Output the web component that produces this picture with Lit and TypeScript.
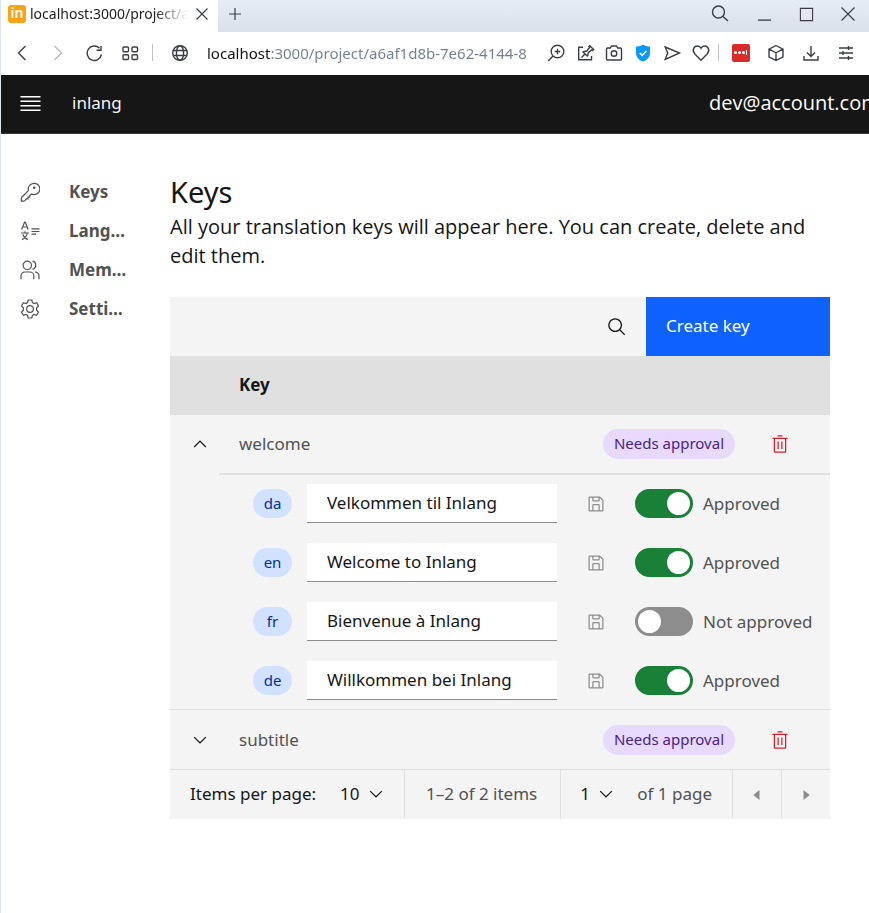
import { LitElement, html, svg, css, nothing } from "lit";
import type { TemplateResult } from "lit";
import { customElement, property, state } from "lit/decorators.js";
import { classMap } from "lit/directives/class-map.js";

const shapes: Record<string, { box: string; body: TemplateResult }> = {
  menu: { box: "0 0 20 20", body: svg`<path d="M2 4H18V5.2H2zM2 7.6H18V8.8H2zM2 11.2H18V12.4H2zM2 14.8H18V16H2z"/>` },
  search: { box: "0 0 32 32", body: svg`<path d="M29,27.5859l-7.5521-7.5521a11.0177,11.0177,0,1,0-1.4141,1.4141L27.5859,29ZM4,13a9,9,0,1,1,9,9A9.01,9.01,0,0,1,4,13Z"/>` },
  trash: { box: "0 0 32 32", body: svg`<path d="M12 12H14V24H12zM18 12H20V24H18z"/><path d="M4 6V8H6V28a2 2 0 0 0 2 2H24a2 2 0 0 0 2-2V8h2V6zM8 28V8H24V28zM12 2H20V4H12z"/>` },
  save: { box: "0 0 32 32", body: svg`<path d="M27.71,9.29l-5-5A1,1,0,0,0,22,4H6A2,2,0,0,0,4,6V26a2,2,0,0,0,2,2H26a2,2,0,0,0,2-2V10A1,1,0,0,0,27.71,9.29ZM12,6h8v4H12Zm8,20H12V18h8Zm2,0V18a2,2,0,0,0-2-2H12a2,2,0,0,0-2,2v8H6V6h4v4a2,2,0,0,0,2,2h8a2,2,0,0,0,2-2V6.41l4,4V26Z"/>` },
  down: { box: "0 0 16 16", body: svg`<path d="M8 11L3 6 3.7 5.3 8 9.6 12.3 5.3 13 6z"/>` },
  up: { box: "0 0 16 16", body: svg`<path d="M8 5L13 10 12.3 10.7 8 6.4 3.7 10.7 3 10z"/>` },
  caretLeft: { box: "0 0 32 32", body: svg`<path d="M20 24L10 16 20 8z"/>` },
  caretRight: { box: "0 0 32 32", body: svg`<path d="M12 8L22 16 12 24z"/>` },
  key: { box: "0 0 20 20", body: svg`<g class="line"><path d="M12.6 1.6a5.6 5.6 0 1 1 .8 10.9c-.9 0-1.5-.2-2.2-.4L9.700 13.500v1.700H8v1.700H6.300L5.200 18.300c-.6.6-1.200.8-2 .8H1.300v-2.400c0-.7.2-1.200.7-1.700l6.400-6.400A5.600 5.600 0 0 1 12.600 1.600z"/></g><circle cx="14.2" cy="5.800" r="1.300"/>` },
  language: { box: "0 0 20 20", body: svg`<g class="line"><path d="M1.600 8.500L4.600 1h.6l3 7.500M2.600 6h4.600M1 12h8M5 10.300V12M7.300 12c-.4 3-2.700 5.300-5.300 6.600M2.900 13.500c.7 2.200 2.500 4.100 5 5.100M11.500 7.800H19.500M11.500 10.500H19.500M11.500 13.200H16"/></g>` },
  members: { box: "0 0 20 20", body: svg`<g class="line"><circle cx="7.300" cy="5.300" r="4.200"/><path d="M12.500 1.200a4.200 4.200 0 0 1 0 8.200M1 19.300v-3.400a3.900 3.900 0 0 1 3.900-3.900h5a3.900 3.900 0 0 1 3.900 3.900v3.400M14.700 12a3.900 3.900 0 0 1 4.300 3.900v3.400"/></g>` },
  settings: { box: "0 0 20 20", body: svg`<g class="line"><circle cx="10" cy="10" r="3.300"/><path d="M8.200 1h3.600l.6 2.500 1.700 1 2.500-.8 1.900 3.200-1.900 1.800v2.600l1.900 1.800-1.900 3.200-2.500-.8-1.700 1-.6 2.500H8.200l-.6-2.500-1.700-1-2.500.8-1.900-3.200 1.900-1.800V8.700L1.500 6.900l1.900-3.200 2.500.8 1.700-1z"/></g>` },
  close: { box: "0 0 16 16", body: svg`<path class="line" d="M2.500 2.500l11 11M13.500 2.500l-11 11"/>` },
  plus: { box: "0 0 16 16", body: svg`<path class="line" d="M8 2v12M2 8h12"/>` },
  find: { box: "0 0 20 20", body: svg`<g class="line wide"><circle cx="8.500" cy="8" r="6"/><path d="M13 12.500l5 4.500"/></g>` },
  minimize: { box: "0 0 16 16", body: svg`<path class="line wide" d="M1 14h14"/>` },
  maximize: { box: "0 0 16 16", body: svg`<path class="line" d="M1.500 1.500h13v13h-13z"/>` },
  exit: { box: "0 0 16 16", body: svg`<path class="line" d="M1.500 1.500l13 13M14.500 1.500l-13 13"/>` },
  back: { box: "0 0 20 20", body: svg`<path class="line wide" d="M13.500 3L6.500 10l7 7"/>` },
  forward: { box: "0 0 20 20", body: svg`<path class="line wide" d="M6.500 3l7 7-7 7"/>` },
  reload: { box: "0 0 20 20", body: svg`<path class="line wide" d="M17.400 11.500A7.200 7.200 0 1 1 15.500 5.200M17 3v4.200h-4.500"/>` },
  tiles: { box: "0 0 20 20", body: svg`<g class="line wide"><rect x="3" y="4" width="5.500" height="4.800" rx="1"/><rect x="12" y="4" width="5.500" height="4.800" rx="1"/><rect x="3" y="11.700" width="5.500" height="4.800" rx="1"/><rect x="12" y="11.700" width="5.500" height="4.800" rx="1"/></g>` },
  globe: { box: "0 0 20 20", body: svg`<g class="line wide"><circle cx="10" cy="10" r="7.300"/><ellipse cx="10" cy="10" rx="3.600" ry="7.300"/><path d="M3.500 7.500h13M3.500 12.500h13"/></g>` },
  zoom: { box: "0 0 20 20", body: svg`<g class="line wide"><circle cx="11.500" cy="8.500" r="6.300"/><path d="M7 13l-4.800 5M11.500 5.800v5.400M8.800 8.500h5.400"/></g>` },
  pin: { box: "0 0 20 20", body: svg`<g class="line wide"><path d="M8 4.200H3.700v12.600h12.800V13M6.500 14.500l3.700-3.800M7.500 8.500l5.200 5M8.300 8.800l3.500-.8 2.700-3.500-.7-.8 1-1 3.800 3.800-1 1-.9-.6-3.400 2.700-.7 3.300"/></g>` },
  camera: { box: "0 0 20 20", body: svg`<g class="line wide"><path d="M3.500 5h2.800l1.200-2h5l1.200 2h2.800c.6 0 1 .4 1 1v10c0 .6-.4 1-1 1h-13c-.6 0-1-.4-1-1V6c0-.6.4-1 1-1z"/><circle cx="10" cy="10.500" r="2.800"/></g>` },
  shield: { box: "0 0 20 20", body: svg`<path fill="#0a99fb" d="M10 1.500c2 1.600 4.200 2 7 2v6.500c0 4-2.800 7-7 8.600-4.200-1.600-7-4.600-7-8.600V3.500c2.800 0 5-.4 7-2z"/><path fill="none" stroke="#fff" stroke-width="1.600" d="M6.800 10l2.400 2.300 4.200-4.300"/>` },
  send: { box: "0 0 20 20", body: svg`<path class="line wide" d="M3.200 4l14.300 6-14.300 6.300 2.500-6.300z"/>` },
  heart: { box: "0 0 20 20", body: svg`<path class="line wide" d="M10 17.200L4.100 11.300C.2 7.200 3.200 3 6.400 3c1.700 0 2.900.8 3.600 2.300C10.700 3.800 11.900 3 13.600 3c3.200 0 6.200 4.200 2.300 8.300z"/>` },
  cube: { box: "0 0 20 20", body: svg`<path class="line wide" d="M10 2.500l7 3.700v7.600l-7 3.700-7-3.700V6.200zM3 6.200l7 3.600 7-3.600M10 9.800v7.700"/>` },
  download: { box: "0 0 20 20", body: svg`<path class="line wide" d="M10 3v10M6 9.500l4 4 4-4M3 13v4h14v-4"/>` },
  sliders: { box: "0 0 20 20", body: svg`<path class="line wide" d="M3 5h14M3 10h14M3 15h14M12.500 3v4M7 8v4M12.500 13v4"/>` },
};

const icon = (name: string, size = 20) => html`
  <svg class="icon" width=${size} height=${size} viewBox=${shapes[name].box} aria-hidden="true">${shapes[name].body}</svg>
`;

const shared = css`
  * { box-sizing: border-box; }
  .icon { display: block; flex: none; fill: currentColor; }
  .line { fill: none; stroke: currentColor; stroke-width: 1.2; }
  .line.wide { stroke-width: 1.4; }
  button {
    display: flex; align-items: center; justify-content: center; flex: none;
    padding: 0; border: 0; background: none; color: inherit; font: inherit; cursor: pointer;
  }
`;

@customElement("browser-bar")
export class BrowserBar extends LitElement {
  static styles = [shared, css`
    :host { display: block; color: #3b3f45; }
    .strip { display: flex; align-items: center; height: 32px; background: linear-gradient(#e6edf5, #d9e0ea); }
    .tab { display: flex; align-items: center; align-self: stretch; width: 217px; padding: 0 4px 4px 7px; background: #fff; }
    .favicon {
      width: 18px; height: 18px; border-radius: 3px; background: #fba314; color: #fff;
      font-size: 14px; font-weight: 600; line-height: 16px; text-align: center;
    }
    .title {
      flex: 1; min-width: 0; margin-left: 4px; overflow: hidden; white-space: nowrap;
      font-size: 14px; line-height: 20px; color: #222;
      mask-image: linear-gradient(to right, #000 125px, transparent 158px);
    }
    .small { width: 24px; height: 24px; }
    .new { width: 34px; height: 24px; margin-bottom: 4px; }
    .window { display: flex; margin: 0 0 4px auto; }
    .window button { width: 42px; height: 24px; }
    .window .look { width: 46px; }
    .tools { display: flex; align-items: center; height: 43px; padding: 0 6px 2px 3px; background: #fff; }
    .tools button { width: 36px; height: 30px; }
    .tools .near { width: 29px; }
    .tools .ext { width: 35px; }
    .tools .faded { color: #bbb; }
    .split { width: 1px; height: 17px; margin: 0 4px; background: #c4c4c4; }
    .split.tight { margin: 0 4px 0 3px; }
    .site { margin-left: 5px; }
    .url {
      flex: 1; min-width: 0; height: 30px; margin: 0 8px 0 9px; padding: 0; border: 0; outline: 0;
      font: 15px "Noto Sans", sans-serif; color: transparent;
      background: linear-gradient(to right, #111 64px, #708090 64px); background-clip: text;
    }
    .badge {
      display: flex; align-items: center; justify-content: center; gap: 1px;
      width: 18px; height: 18px; border-radius: 2px; background: #d92b27;
    }
    .dot { width: 3px; height: 3px; border-radius: 50%; background: #fff; }
    .bar { width: 1px; height: 5px; background: #fff; }
  `];

  render() {
    const page = [["zoom", "Zoom"], ["pin", "Edit page"], ["camera", "Snapshot"], ["shield", "Protection"], ["send", "Send"], ["heart", "Favourite"]];
    return html`
      <div class="strip">
        <div class="tab">
          <span class="favicon">in</span>
          <span class="title">localhost:3000/project/a</span>
          <button class="small" aria-label="Close tab">${icon("close", 16)}</button>
        </div>
        <button class="new" aria-label="New tab">${icon("plus", 16)}</button>
        <div class="window">
          <button class="look" aria-label="Search tabs">${icon("find")}</button>
          <button aria-label="Minimize">${icon("minimize", 15)}</button>
          <button aria-label="Maximize">${icon("maximize", 15)}</button>
          <button aria-label="Close window">${icon("exit", 16)}</button>
        </div>
      </div>
      <div class="tools">
        <button aria-label="Back">${icon("back")}</button>
        <button class="faded" aria-label="Forward">${icon("forward")}</button>
        <button aria-label="Reload">${icon("reload")}</button>
        <button aria-label="Start page">${icon("tiles")}</button>
        <span class="split"></span>
        <button class="site" aria-label="Site information">${icon("globe")}</button>
        <input class="url" aria-label="Address" value="localhost:3000/project/a6af1d8b-7e62-4144-8">
        ${page.map(([name, label]) => html`<button class="near" aria-label=${label}>${icon(name)}</button>`)}
        <span class="split tight"></span>
        <button class="ext" aria-label="Password manager">
          <span class="badge"><i class="dot"></i><i class="dot"></i><i class="dot"></i><i class="bar"></i></span>
        </button>
        <button class="ext" aria-label="Extensions">${icon("cube")}</button>
        <button class="ext" aria-label="Downloads">${icon("download")}</button>
        <button class="ext" aria-label="Easy setup">${icon("sliders")}</button>
      </div>
    `;
  }
}

interface Translation { lang: string; text: string; approved: boolean; }
interface TranslationKey { name: string; open: boolean; translations: Translation[]; }

@customElement("key-table")
export class KeyTable extends LitElement {
  @property({ attribute: false }) keys: TranslationKey[] = [];

  static styles = [shared, css`
    :host { display: block; background: #f4f4f4; color: #525252; font-size: 17px; line-height: 24px; }
    .toolbar { display: flex; justify-content: flex-end; height: 59px; color: #161616; }
    .find { width: 59px; }
    .toolbar .create { justify-content: flex-start; width: 184px; padding: 0 0 2px 20px; background: #0f62fe; color: #fff; }
    table { width: 100%; border-collapse: separate; border-spacing: 0; table-layout: fixed; }
    th, td { padding: 0; text-align: left; }
    th { height: 59px; padding-bottom: 2px; background: #e0e0e0; color: #161616; font-weight: 700; }
    .c-open { width: 49px; }
    .c-tag { width: 132px; }
    .c-del { width: 95px; }
    th.name, td.name { padding-left: 20px; }
    .row td { height: 60px; border-bottom: 1px solid #e0e0e0; }
    .row.open td { border-bottom-width: 2px; }
    .row.open td.toggle { border-bottom-color: transparent; }
    .toggle button { width: 100%; height: 40px; padding-left: 11px; color: #161616; }
    .status {
      display: block; height: 30px; border-radius: 15px; background: #e8daff; color: #491d8b;
      font-size: 15px; line-height: 29px; text-align: center;
    }
    .remove { width: 30px; height: 30px; margin-left: 30px; color: #da1e28; }
    .detail td { border-bottom: 1px solid #e0e0e0; }
    .list {
      display: grid; grid-template-columns: minmax(0, 1fr); gap: 20px;
      margin: 0; padding: 9px 0 9px 83px; list-style: none;
    }
    .item { display: flex; align-items: center; }
    .lang {
      flex: none; width: 39px; height: 29px; margin-right: 15px; border-radius: 15px; background: #d0e2ff; color: #002d9c;
      font-size: 15px; line-height: 28px; text-align: center;
    }
    .text {
      flex: 1; min-width: 0; height: 39px; padding: 0 19px 2px 20px; border: 0; border-bottom: 1px solid #8d8d8d;
      border-radius: 0; outline: 0; background: #fff; color: #161616; font: inherit;
    }
    .item .save { width: 20px; height: 30px; margin: 0 29px; color: #8d8d8d; }
    .approve { display: flex; align-items: center; flex: none; gap: 10px; width: 195px; white-space: nowrap; }
    .switch {
      appearance: none; flex: none; width: 58px; height: 29px; margin: 0; padding: 3px;
      border-radius: 15px; background: #8d8d8d;
    }
    .switch::before { content: ""; display: block; width: 23px; height: 23px; border-radius: 50%; background: #fff; }
    .switch:checked { background: #198038; }
    .switch:checked::before { margin-left: auto; }
    .pages { display: flex; align-items: stretch; height: 49px; }
    .cell { display: flex; align-items: center; padding-bottom: 1px; white-space: nowrap; }
    .size, .range { border-right: 1px solid #e0e0e0; }
    .size { padding-left: 20px; padding-right: 18px; color: #161616; gap: 24px; }
    .range { padding-left: 21px; padding-right: 23px; }
    .page { padding-right: 20px; gap: 21px; margin-left: auto; }
    .pick { display: grid; align-items: center; color: #161616; }
    .pick select {
      grid-area: 1 / 1; appearance: none; padding: 0 26px 0 0; border: 0; outline: 0;
      background: none; color: inherit; font: inherit;
    }
    .pick .icon { grid-area: 1 / 1; justify-self: end; pointer-events: none; }
    .step { width: 49px; border-left: 1px solid #e0e0e0; color: #8d8d8d; }
  `];

  private flip(key: TranslationKey) {
    key.open = !key.open;
    this.requestUpdate();
  }

  private approve(item: Translation) {
    item.approved = !item.approved;
    this.requestUpdate();
  }

  private renderItem(item: Translation) {
    return html`
      <li class="item">
        <span class="lang">${item.lang}</span>
        <input class="text" aria-label=${`Translation ${item.lang}`} .value=${item.text}>
        <button class="save" aria-label="Save">${icon("save")}</button>
        <label class="approve">
          <input class="switch" type="checkbox" role="switch" .checked=${item.approved} @change=${() => this.approve(item)}>
          ${item.approved ? "Approved" : "Not approved"}
        </label>
      </li>
    `;
  }

  private renderKey(key: TranslationKey) {
    return html`
      <tr class=${classMap({ row: true, open: key.open })}>
        <td class="toggle">
          <button aria-label="Show translations" aria-expanded=${key.open} @click=${() => this.flip(key)}>
            ${icon(key.open ? "up" : "down")}
          </button>
        </td>
        <td class="name">${key.name}</td>
        <td><span class="status">Needs approval</span></td>
        <td><button class="remove" aria-label="Delete key">${icon("trash")}</button></td>
      </tr>
      ${key.open ? html`
        <tr class="detail">
          <td colspan="4"><ul class="list">${key.translations.map((item) => this.renderItem(item))}</ul></td>
        </tr>` : nothing}
    `;
  }

  render() {
    return html`
      <div class="toolbar">
        <button class="find" aria-label="Search">${icon("search")}</button>
        <button class="create">Create key</button>
      </div>
      <table>
        <colgroup><col class="c-open"><col><col class="c-tag"><col class="c-del"></colgroup>
        <thead><tr><th></th><th class="name" scope="col">Key</th><th></th><th></th></tr></thead>
        <tbody>${this.keys.map((key) => this.renderKey(key))}</tbody>
      </table>
      <div class="pages">
        <div class="cell size">
          <label for="size">Items per page:</label>
          <span class="pick"><select id="size"><option>10</option></select>${icon("down")}</span>
        </div>
        <div class="cell range">1–2 of 2 items</div>
        <div class="cell page">
          <span class="pick"><select id="page" aria-label="Page number"><option>1</option></select>${icon("down")}</span>
          <span>of 1 page</span>
        </div>
        <button class="step" aria-label="Previous page">${icon("caretLeft")}</button>
        <button class="step" aria-label="Next page">${icon("caretRight")}</button>
      </div>
    `;
  }
}

@customElement("app-root")
export class AppRoot extends LitElement {
  @state() private keys: TranslationKey[] = [
    {
      name: "welcome",
      open: true,
      translations: [
        { lang: "da", text: "Velkommen til Inlang", approved: true },
        { lang: "en", text: "Welcome to Inlang", approved: true },
        { lang: "fr", text: "Bienvenue à Inlang", approved: false },
        { lang: "de", text: "Willkommen bei Inlang", approved: true },
      ],
    },
    { name: "subtitle", open: false, translations: [] },
  ];

  static styles = [shared, css`
    :host {
      display: block; box-sizing: border-box; min-height: 100vh; overflow: hidden;
      border-left: 1px solid #dfe6f0; background: #fff; color: #161616;
      font-family: "Noto Sans", sans-serif; font-size: 17px; line-height: 24px;
    }
    .top {
      display: flex; align-items: center; height: 59px; padding: 0 0 2px 17px;
      border-bottom: 1px solid #393939; background: #161616; color: #fff;
    }
    .brand { margin: 0 auto 0 29px; color: #f4f4f4; text-decoration: none; }
    .account {
      width: 160px; overflow: hidden; white-space: nowrap;
      font-family: "Open Sans", "Noto Sans", sans-serif; font-size: 20px; line-height: 28px;
    }
    .body { display: flex; align-items: flex-start; }
    .side { flex: none; width: 169px; padding: 38px 39px 0 19px; }
    .link {
      display: flex; align-items: center; gap: 29px; height: 39px;
      color: #525252; font-weight: 700; text-decoration: none;
    }
    .link span { min-width: 0; overflow: hidden; text-overflow: ellipsis; white-space: nowrap; }
    main { flex: 1; min-width: 0; padding: 40px 39px 40px 0; }
    h1 { margin: 0 0 2px; font-size: 29px; font-weight: 400; line-height: 36px; }
    p {
      margin: 0 0 27px;
      font-family: "Open Sans", "Noto Sans", sans-serif; font-size: 20px; line-height: 29px;
    }
  `];

  render() {
    const links = [["key", "Keys"], ["language", "Languages"], ["members", "Members"], ["settings", "Settings"]];
    return html`
      <browser-bar></browser-bar>
      <header class="top">
        <button aria-label="Open menu">${icon("menu", 25)}</button>
        <a class="brand" href="#">inlang</a>
        <span class="account">dev@account.com</span>
      </header>
      <div class="body">
        <nav class="side">
          ${links.map(([name, label]) => html`<a class="link" href="#">${icon(name)}<span>${label}</span></a>`)}
        </nav>
        <main>
          <h1>Keys</h1>
          <p>All your translation keys will appear here. You can create, delete and edit them.</p>
          <key-table .keys=${this.keys}></key-table>
        </main>
      </div>
    `;
  }
}
